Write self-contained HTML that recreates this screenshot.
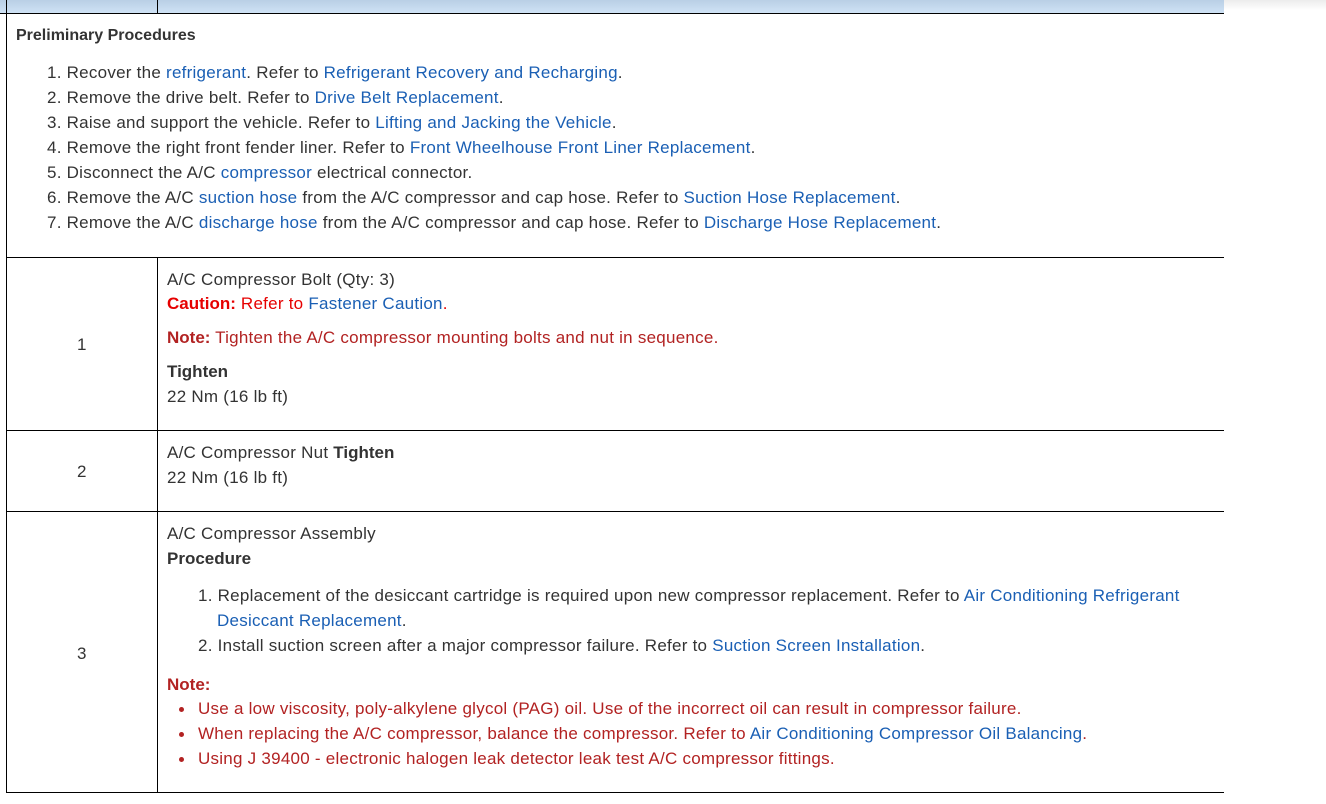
<!DOCTYPE html>
<html><head><meta charset="utf-8"><style>
*{margin:0;padding:0;box-sizing:border-box}
body{width:1326px;height:804px;background:#fff;position:relative;overflow:hidden;font-family:"Liberation Sans",Arial,sans-serif;font-size:17px;color:#333;letter-spacing:0.25px}
.l{position:absolute;white-space:nowrap;line-height:25px;height:25px}
a{color:#1a5fb4;text-decoration:none}
.r{color:#e60000}.n{color:#b22222}
b{font-weight:bold;letter-spacing:0}
.h{position:absolute;background:#000}
.d{position:absolute;width:5px;height:5px;border-radius:50%;background:#b22222}
</style></head><body>
<div style="position:absolute;left:0;top:0;width:1224px;height:13px;background:linear-gradient(#b9cfe5,#cfe2f5)"></div>
<div style="position:absolute;left:1224px;top:0;width:102px;height:10px;background:linear-gradient(#ececec,#fff)"></div>
<div class="h" style="left:6px;top:0;width:1px;height:793px"></div>
<div class="h" style="left:157px;top:0;width:1px;height:13px"></div>
<div class="h" style="left:0;top:13px;width:1224px;height:1px"></div>
<div class="h" style="left:6px;top:257px;width:1218px;height:1px"></div>
<div class="h" style="left:6px;top:430px;width:1218px;height:1px"></div>
<div class="h" style="left:6px;top:511px;width:1218px;height:1px"></div>
<div class="h" style="left:6px;top:792px;width:1218px;height:1px"></div>
<div class="h" style="left:157px;top:257px;width:1px;height:536px"></div>

<div class="l" style="left:16px;top:23px;font-size:16px"><b>Preliminary Procedures</b></div>
<div class="l" style="left:47px;top:60px">1. Recover the <a>refrigerant</a>. Refer to <a>Refrigerant Recovery and Recharging</a>.</div>
<div class="l" style="left:47px;top:85px">2. Remove the drive belt. Refer to <a>Drive Belt Replacement</a>.</div>
<div class="l" style="left:47px;top:110px">3. Raise and support the vehicle. Refer to <a>Lifting and Jacking the Vehicle</a>.</div>
<div class="l" style="left:47px;top:135px">4. Remove the right front fender liner. Refer to <a>Front Wheelhouse Front Liner Replacement</a>.</div>
<div class="l" style="left:47px;top:160px">5. Disconnect the A/C <a>compressor</a> electrical connector.</div>
<div class="l" style="left:47px;top:185px">6. Remove the A/C <a>suction hose</a> from the A/C compressor and cap hose. Refer to <a>Suction Hose Replacement</a>.</div>
<div class="l" style="left:47px;top:210px">7. Remove the A/C <a>discharge hose</a> from the A/C compressor and cap hose. Refer to <a>Discharge Hose Replacement</a>.</div>

<div class="l" style="left:77px;top:332px">1</div>
<div class="l" style="left:167px;top:267px">A/C Compressor Bolt (Qty: 3)</div>
<div class="l r" style="left:167px;top:291px"><b>Caution:</b> Refer to <a>Fastener Caution</a>.</div>
<div class="l n" style="left:167px;top:325px"><b>Note:</b> Tighten the A/C compressor mounting bolts and nut in sequence.</div>
<div class="l" style="left:167px;top:359px"><b>Tighten</b></div>
<div class="l" style="left:167px;top:384px">22 Nm (16 lb ft)</div>

<div class="l" style="left:77px;top:459px">2</div>
<div class="l" style="left:167px;top:440px">A/C Compressor Nut <b>Tighten</b></div>
<div class="l" style="left:167px;top:465px">22 Nm (16 lb ft)</div>

<div class="l" style="left:77px;top:641px">3</div>
<div class="l" style="left:167px;top:521px">A/C Compressor Assembly</div>
<div class="l" style="left:167px;top:546px"><b>Procedure</b></div>
<div class="l" style="left:198px;top:583px">1. Replacement of the desiccant cartridge is required upon new compressor replacement. Refer to <a>Air Conditioning Refrigerant</a></div>
<div class="l" style="left:217px;top:608px"><a>Desiccant Replacement</a>.</div>
<div class="l" style="left:198px;top:633px">2. Install suction screen after a major compressor failure. Refer to <a>Suction Screen Installation</a>.</div>
<div class="l n" style="left:167px;top:672px"><b>Note:</b></div>
<div class="d" style="left:179px;top:707px"></div>
<div class="d" style="left:179px;top:732px"></div>
<div class="d" style="left:179px;top:757px"></div>
<div class="l n" style="left:198px;top:696px">Use a low viscosity, poly-alkylene glycol (PAG) oil. Use of the incorrect oil can result in compressor failure.</div>
<div class="l n" style="left:198px;top:721px">When replacing the A/C compressor, balance the compressor. Refer to <a>Air Conditioning Compressor Oil Balancing</a>.</div>
<div class="l n" style="left:198px;top:746px">Using J 39400 - electronic halogen leak detector leak test A/C compressor fittings.</div>
</body></html>
